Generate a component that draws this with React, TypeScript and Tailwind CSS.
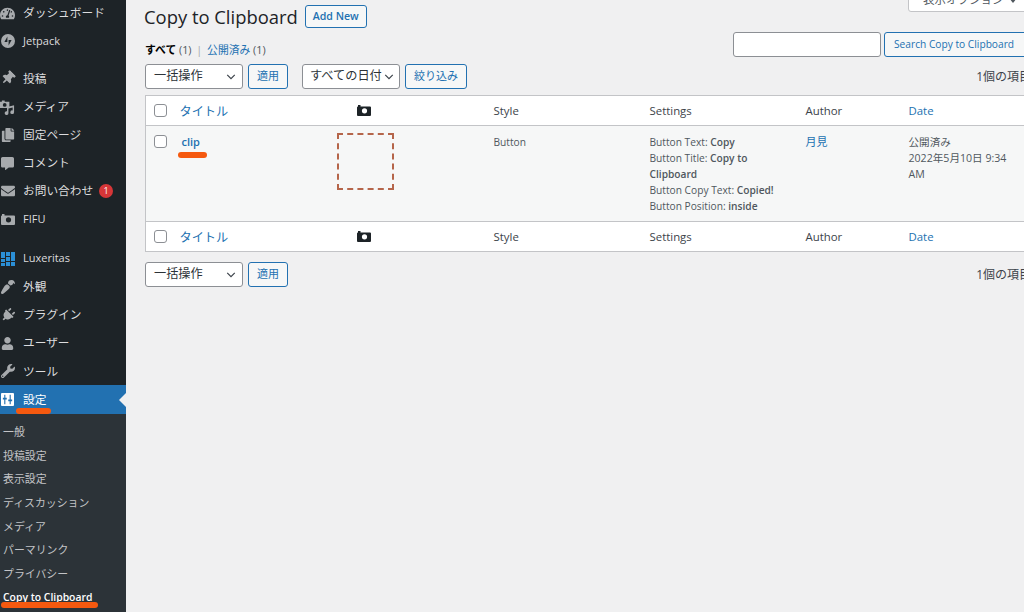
import { ReactNode } from "react";
import { FaCopy, FaCommentAlt, FaEnvelope, FaPaintBrush, FaPlug, FaTachometerAlt, FaThumbtack, FaUser, FaWrench } from "react-icons/fa";

const fontStack = "font-['Open_Sans','Noto_Sans_CJK_JP',sans-serif]";

function CameraIcon({ className }: { className?: string }) {
  return (
    <svg viewBox="0 0 14 11" className={className} fill="currentColor">
      <path fillRule="evenodd" d="M1 0h2.5v1.5H13a1 1 0 0 1 1 1V10a1 1 0 0 1-1 1H1a1 1 0 0 1-1-1V2.5a1 1 0 0 1 1-1zM7.5 3.2a2.6 2.6 0 1 0 0 5.2 2.6 2.6 0 0 0 0-5.2z" />
    </svg>
  );
}

function JetpackIcon() {
  return (
    <svg viewBox="0 0 14 14" className="w-[14px] h-[14px]" fill="currentColor">
      <path fillRule="evenodd" d="M7 0a7 7 0 1 0 0 14A7 7 0 0 0 7 0zM6.4 2.5v5.6H3.4zM7.6 5.9h3l-3 5.6z" />
    </svg>
  );
}

function MediaIcon() {
  return (
    <svg viewBox="0 0 16 16" className="w-[16px] h-[16px]" fill="currentColor">
      <path fillRule="evenodd" d="M0 2.5h2V1h3v1.5h5V9H0zM5 3.8a2 2 0 1 0 0 4 2 2 0 0 0 0-4z" />
      <path d="M15 6v7.5a2 2 0 1 1-1.5-1.9V8.5L9 9.5v5a2 2 0 1 1-1.5-1.9V8z" />
    </svg>
  );
}

function LuxeritasIcon() {
  return (
    <svg viewBox="0 0 14 14" className="w-[14px] h-[14px]" fill="#2b8fd6">
      <rect x="0" y="0" width="4" height="6" />
      <rect x="0" y="7" width="4" height="3" />
      <rect x="0" y="11" width="4" height="3" />
      <rect x="5" y="0" width="4" height="4" />
      <rect x="5" y="5" width="4" height="4" />
      <rect x="5" y="10" width="4" height="4" />
      <rect x="10" y="0" width="4" height="9" />
      <rect x="10" y="10" width="4" height="4" />
    </svg>
  );
}

function SettingsIcon() {
  return (
    <svg viewBox="0 0 14 14" className="w-[13px] h-[13px]" fill="currentColor">
      <path fillRule="evenodd" d="M1 0h12a1 1 0 0 1 1 1v12a1 1 0 0 1-1 1H1a1 1 0 0 1-1-1V1a1 1 0 0 1 1-1zM3.5 2v3H2v2h1.5v5h1.2V7H6.2V5H4.7V2zM9.3 2v5H7.8v2h1.5v3h1.2V9H12V7h-1.5V2z" />
    </svg>
  );
}

function Chevron() {
  return (
    <svg viewBox="0 0 12 8" className="w-[10px] h-[6px] shrink-0 text-[#3c434a]" fill="none" stroke="currentColor" strokeWidth="1.6">
      <path d="M1 1.2l5 5 5-5" />
    </svg>
  );
}

function MenuItem({ icon, label, latin, active, children }: { icon: ReactNode; label: string; latin?: boolean; active?: boolean; children?: ReactNode }) {
  return (
    <div className={`relative flex items-center h-[28.2px] ${latin ? "text-[11px]" : "text-[11.7px]"} ${active ? "bg-[#2271b1] text-white" : "text-[#dcdcde]"}`}>
      <span className={`w-[23px] shrink-0 flex justify-center pr-[8px] ${active ? "text-white" : "text-[#a7aaad]"}`}>{icon}</span>
      <span>{label}</span>
      {children}
    </div>
  );
}

function SubItem({ label, current }: { label: string; current?: boolean }) {
  return <div className={`flex items-center h-[23.6px] pl-[3px] ${current ? "text-[10.4px] text-white font-semibold" : "text-[10.9px] text-[#c3c4c7]"}`}>{label}</div>;
}

function Sidebar() {
  return (
    <aside className="relative w-[126px] shrink-0 bg-[#1d2327] -mt-[1px]">
      <MenuItem icon={<FaTachometerAlt size={15} />} label="ダッシュボード" />
      <MenuItem icon={<JetpackIcon />} label="Jetpack" latin />
      <div className="h-[9px]" />
      <MenuItem icon={<FaThumbtack size={14} className="rotate-45" />} label="投稿" />
      <MenuItem icon={<MediaIcon />} label="メディア" />
      <MenuItem icon={<FaCopy size={14} />} label="固定ページ" />
      <MenuItem icon={<FaCommentAlt size={13} />} label="コメント" />
      <MenuItem icon={<FaEnvelope size={14} />} label="お問い合わせ">
        <span className="ml-[6px] flex items-center justify-center w-[14px] h-[14px] rounded-full bg-[#d63638] text-white text-[9px]">1</span>
      </MenuItem>
      <MenuItem icon={<CameraIcon className="w-[14px] h-[11px]" />} label="FIFU" latin />
      <div className="h-[11px]" />
      <MenuItem icon={<LuxeritasIcon />} label="Luxeritas" latin />
      <MenuItem icon={<FaPaintBrush size={14} className="rotate-180" />} label="外観" />
      <MenuItem icon={<FaPlug size={14} className="rotate-45" />} label="プラグイン" />
      <MenuItem icon={<FaUser size={13} />} label="ユーザー" />
      <MenuItem icon={<FaWrench size={14} />} label="ツール" />
      <MenuItem icon={<SettingsIcon />} label="設定" active>
        <span className="absolute right-0 top-1/2 -translate-y-1/2 border-y-[7px] border-y-transparent border-r-[7px] border-r-[#f0f0f1]" />
      </MenuItem>
      <div className="bg-[#2c3338] pt-[7px] h-[220px]">
        <SubItem label="一般" />
        <SubItem label="投稿設定" />
        <SubItem label="表示設定" />
        <SubItem label="ディスカッション" />
        <SubItem label="メディア" />
        <SubItem label="パーマリンク" />
        <SubItem label="プライバシー" />
        <SubItem label="Copy to Clipboard" current />
      </div>
      <span className="absolute left-[16px] top-[409px] w-[35px] h-[6px] rounded-full bg-[#f5590f]" />
      <span className="absolute left-[1px] top-[603px] w-[97px] h-[6px] rounded-full bg-[#f5590f]" />
    </aside>
  );
}

function OutlineButton({ children, className = "" }: { children: ReactNode; className?: string }) {
  return (
    <button className={`h-[25px] shrink-0 whitespace-nowrap rounded-[3px] border border-[#2271b1] bg-[#f6f7f7] text-[#2271b1] ${className}`}>
      {children}
    </button>
  );
}

function SelectBox({ label, className = "" }: { label: string; className?: string }) {
  return (
    <div className={`h-[25px] shrink-0 flex items-center justify-between rounded-[3px] border border-[#8c8f94] bg-white text-[#2c3338] text-[12.2px] whitespace-nowrap ${className}`}>
      <span>{label}</span>
      <Chevron />
    </div>
  );
}

function CheckBox() {
  return <input type="checkbox" className="appearance-none block w-[13px] h-[13px] rounded-[3px] border border-[#8c8f94] bg-white" />;
}

function HeadRow({ borderClass }: { borderClass: string }) {
  return (
    <tr className={`h-[30px] bg-white text-[11.4px] ${borderClass}`}>
      <td className="pl-[8px]"><CheckBox /></td>
      <td className="pl-[10px] pt-[3px] text-[#2271b1] text-[12.2px]">タイトル</td>
      <td className="pl-[30px]"><CameraIcon className="w-[14px] h-[11px] text-[#1d2327]" /></td>
      <td className="pl-[11px] text-[#3c434a]">Style</td>
      <td className="pl-[11px] text-[#3c434a]">Settings</td>
      <td className="pl-[11px] text-[#3c434a]">Author</td>
      <td className="pl-[11px] text-[#2271b1]">Date</td>
    </tr>
  );
}

function SettingLine({ name, value }: { name: string; value: string }) {
  return (
    <div>
      {name}: <b className="font-semibold">{value}</b>
    </div>
  );
}

export default function App() {
  return (
    <div className={`flex w-[1024px] h-[612px] overflow-hidden bg-[#f0f0f1] ${fontStack}`}>
      <Sidebar />
      <main className="relative pl-[19px] w-[898px] shrink-0">
        <div className="w-[886px]">
          <div className="flex items-start h-[32px]">
            <h1 className="-ml-[1px] mt-[3px] text-[18.4px] leading-[28px] text-[#1d2327]">Copy to Clipboard</h1>
            <button className="ml-[7px] mt-[5px] h-[23px] w-[62px] rounded-[3px] border border-[#2271b1] bg-[#f6f7f7] text-[#2271b1] text-[10.6px] font-semibold">Add New</button>
            <div className="ml-auto -mt-[12px] -mr-[8px] h-[24px] w-[131px] flex items-center gap-[5px] pl-[14px] rounded-[3px] border border-[#c3c4c7] bg-white text-[#50575e] text-[11.5px]">
              表示オプション
              <span className="border-x-[4px] border-x-transparent border-t-[5px] border-t-[#50575e]" />
            </div>
          </div>
          <div className="flex items-start justify-between h-[32px]">
            <div className="mt-[10px] text-[10.8px] text-[#50575e]">
              <b className="font-semibold text-black">すべて</b> (1) <span className="text-[#a7aaad] mx-[2px]">|</span> <span className="text-[#2271b1]">公開済み</span> (1)
            </div>
            <div className="flex gap-[3px] items-center mr-[1px]">
              <input className="w-[148px] h-[25px] rounded-[3px] border border-[#8c8f94] bg-white" />
              <OutlineButton className="w-[146px] pl-[9px] text-left text-[10.2px]">Search Copy to Clipboard</OutlineButton>
            </div>
          </div>
          <div className="flex items-center h-[25px]">
            <SelectBox label="一括操作" className="w-[98px] pl-[8px] pr-[6px]" />
            <OutlineButton className="ml-[5px] w-[40px] text-[11px]">適用</OutlineButton>
            <SelectBox label="すべての日付" className="ml-[14px] w-[98px] pl-[7px] pr-[5px]" />
            <OutlineButton className="ml-[5px] w-[62px] text-[11px]">絞り込み</OutlineButton>
            <span className="ml-auto text-[12px] text-[#3c434a]">1個の項目</span>
          </div>
          <table className="mt-[6px] w-full table-fixed border-collapse border border-[#c3c4c7]">
            <colgroup>
              <col className="w-[24px]" />
              <col className="w-[157px]" />
              <col className="w-[156px]" />
              <col className="w-[156px]" />
              <col className="w-[156px]" />
              <col className="w-[103px]" />
              <col />
            </colgroup>
            <tbody>
              <HeadRow borderClass="border-b border-[#c3c4c7]" />
              <tr className="h-[96px] bg-[#f6f7f7] align-top text-[10.2px] leading-[16px] text-[#50575e]">
                <td className="pl-[8px] pt-[9px]"><CheckBox /></td>
                <td className="relative pl-[12px] pt-[8px] text-[#2271b1] font-semibold text-[11px]">
                  clip
                  <span className="absolute left-[8px] top-[26px] w-[29px] h-[6px] rounded-full bg-[#f5590f]" />
                </td>
                <td className="pl-[10px] pt-[7px]"><div className="w-[57px] h-[57px] border-2 border-dashed border-[#b5654a]" /></td>
                <td className="pl-[11px] pt-[8px]">Button</td>
                <td className="pl-[11px] pr-[10px] pt-[8px]">
                  <SettingLine name="Button Text" value="Copy" />
                  <SettingLine name="Button Title" value="Copy to Clipboard" />
                  <SettingLine name="Button Copy Text" value="Copied!" />
                  <SettingLine name="Button Position" value="inside" />
                </td>
                <td className="pl-[11px] pt-[8px] text-[#2271b1] text-[11px]">月見</td>
                <td className="pl-[11px] pr-[10px] pt-[8px] text-[10.6px]">公開済み<br />2022年5月10日 9:34 AM</td>
              </tr>
              <HeadRow borderClass="border-t border-[#c3c4c7]" />
            </tbody>
          </table>
          <div className="flex items-center h-[25px] mt-[10px]">
            <SelectBox label="一括操作" className="w-[98px] pl-[8px] pr-[6px]" />
            <OutlineButton className="ml-[5px] w-[40px] text-[11px]">適用</OutlineButton>
            <span className="ml-auto text-[12px] text-[#3c434a]">1個の項目</span>
          </div>
        </div>
      </main>
    </div>
  );
}
